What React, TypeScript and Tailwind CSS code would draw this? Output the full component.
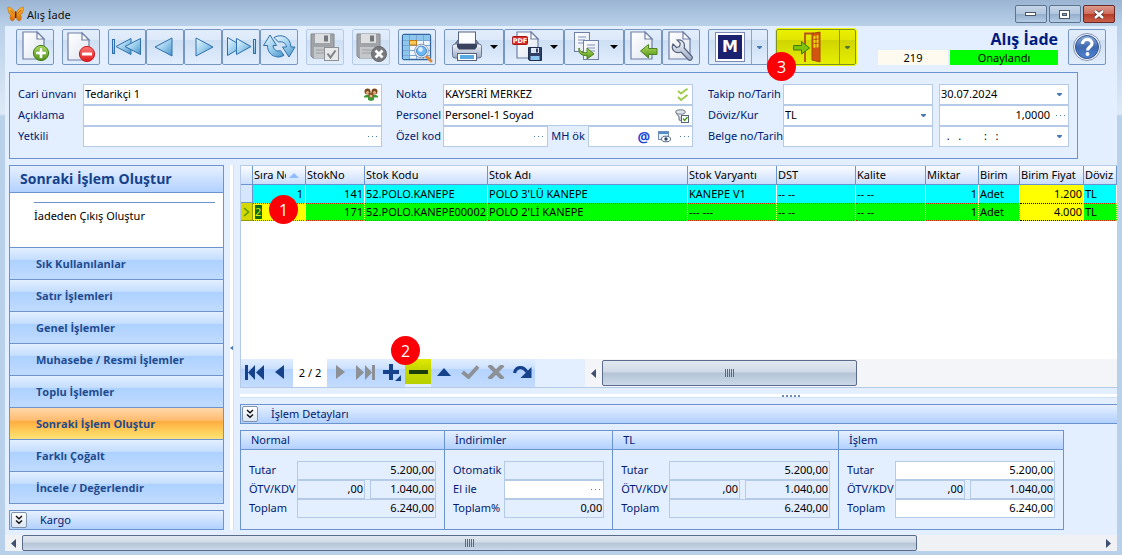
import type { ReactNode } from "react";

const deskGradient =
  "bg-[linear-gradient(#9ab4d2_0px,#b9d0e9_26px,#dde9f6_114px,#bad1ea_116px,#b9d0ea_100%)]";

/* ---------- icons ---------- */

function Defs() {
  return (
    <svg width="0" height="0" className="absolute" aria-hidden="true">
      <defs>
        <linearGradient id="gBlue" x1="0" y1="0" x2="1" y2="1">
          <stop offset="0" stopColor="#eaf7fe" />
          <stop offset="0.5" stopColor="#9fd0ee" />
          <stop offset="1" stopColor="#4593c8" />
        </linearGradient>
        <linearGradient id="gPage" x1="0" y1="0" x2="1" y2="1">
          <stop offset="0" stopColor="#ffffff" />
          <stop offset="1" stopColor="#dfe5f0" />
        </linearGradient>
        <linearGradient id="gGreen" x1="0" y1="0" x2="0" y2="1">
          <stop offset="0" stopColor="#b8e05e" />
          <stop offset="1" stopColor="#4d8f15" />
        </linearGradient>
        <linearGradient id="gRed" x1="0" y1="0" x2="0" y2="1">
          <stop offset="0" stopColor="#ff7a78" />
          <stop offset="1" stopColor="#e1181c" />
        </linearGradient>
        <linearGradient id="gSteel" x1="0" y1="0" x2="0" y2="1">
          <stop offset="0" stopColor="#f7f9fc" />
          <stop offset="1" stopColor="#9aa8c2" />
        </linearGradient>
        <linearGradient id="gHelp" x1="0" y1="0" x2="0" y2="1">
          <stop offset="0" stopColor="#8fb0df" />
          <stop offset="0.5" stopColor="#3f68b0" />
          <stop offset="1" stopColor="#4f86d4" />
        </linearGradient>
        <linearGradient id="gWing" x1="0" y1="0" x2="0" y2="1">
          <stop offset="0" stopColor="#ffb62e" />
          <stop offset="1" stopColor="#d96a08" />
        </linearGradient>
      </defs>
    </svg>
  );
}

function Svg({ w = 34, h = 34, children }: { w?: number; h?: number; children: ReactNode }) {
  return (
    <svg width={w} height={h} viewBox={`0 0 ${w} ${h}`} fill="none" aria-hidden="true" className="shrink-0">
      {children}
    </svg>
  );
}

const Page = ({ x = 5, y = 2, w = 21, h = 27 }: { x?: number; y?: number; w?: number; h?: number }) => (
  <>
    <path
      d={`M${x} ${y}h${w - 7}l7 7v${h - 7}h${-w}z`}
      fill="url(#gPage)"
      stroke="#6f7fa6"
      strokeWidth="1.2"
    />
    <path d={`M${x + w - 7} ${y}v7h7z`} fill="#fff" stroke="#6f7fa6" strokeWidth="1.2" />
  </>
);

const NewDoc = () => (
  <Svg>
    <Page />
    <circle cx="23" cy="23" r="7.6" fill="url(#gGreen)" stroke="#3f7a18" />
    <path d="M21.3 17.8h3.4v3.5h3.5v3.4h-3.5v3.5h-3.4v-3.5h-3.5v-3.4h3.5z" fill="#fff" stroke="#4d8f15" strokeWidth=".5" />
  </Svg>
);
const DeleteDoc = () => (
  <Svg>
    <Page x={4} y={3} />
    <circle cx="23" cy="24" r="7.6" fill="url(#gRed)" stroke="#c81a1e" />
    <rect x="18" y="22.4" width="10" height="3.2" rx=".6" fill="#fff" />
  </Svg>
);
const FirstIcon = () => (
  <Svg>
    <g fill="url(#gBlue)" stroke="#2f6fab" strokeWidth="1">
      <rect x="2.5" y="9.5" width="2" height="14" />
      <path d="M21 8.5v16L6 16.5z" />
      <path d="M30.5 8.5v16L15 16.5z" />
    </g>
  </Svg>
);
const PrevIcon = () => (
  <Svg>
    <path d="M24 8v18L7 17z" fill="url(#gBlue)" stroke="#2f6fab" />
  </Svg>
);
const NextIcon = () => (
  <Svg>
    <path d="M10 8v18l17-9z" fill="url(#gBlue)" stroke="#2f6fab" />
  </Svg>
);
const LastIcon = () => (
  <Svg>
    <g fill="url(#gBlue)" stroke="#2f6fab" strokeWidth="1">
      <path d="M3.5 7.5v18L19 16.5z" />
      <path d="M12.5 8.5v16L27 16.5z" />
      <rect x="29.5" y="9.5" width="2" height="14" />
    </g>
  </Svg>
);
const RefreshIcon = () => (
  <Svg>
    <g fill="url(#gBlue)" stroke="#2f6fab" strokeWidth="1">
      <path d="M8 5L1.5 15.500h4c0 6 3.500 11 10.500 11.500 2.500 0 4.500-.6 6-1.800l-3.500-4.500c-4 1-7-1-7.500-5.200h3.500z" />
      <path d="M12 7.500c8-4.500 16.500 0 17 9.500h4L27 27l-6.500-10h4c-.5-4-4-6-8-5z" />
    </g>
  </Svg>
);
const Disk = ({ children }: { children: ReactNode }) => (
  <Svg>
    <path d="M3 4h23v24H5l-2-2z" fill="#a0a3a7" stroke="#85888c" />
    <rect x="7" y="4" width="15" height="9" fill="#dcdee0" />
    <rect x="16" y="5.5" width="4" height="6" fill="#73767a" />
    <rect x="6" y="17" width="17" height="11" fill="#c4c7ca" />
    <path d="M8 20h12M8 23h12" stroke="#9b9ea2" />
    {children}
  </Svg>
);
const SaveOk = () => (
  <Disk>
    <rect x="16.5" y="17.5" width="14" height="13" fill="#e6e8ea" stroke="#8d9094" />
    <path d="M19.5 23.5l3 4 5-7" stroke="#7e8185" strokeWidth="2" />
  </Disk>
);
const SaveCancel = () => (
  <Disk>
    <circle cx="25" cy="24" r="7.5" fill="#77797d" stroke="#66686c" />
    <path d="M21.5 20.5l7 7m0-7l-7 7" stroke="#fff" strokeWidth="2.8" />
  </Disk>
);
const GridFind = () => (
  <Svg>
    <rect x="2.5" y="4.5" width="28" height="25" rx="1.5" fill="#eef5fc" stroke="#34679f" strokeWidth="1.3" />
    <path d="M3 5h27v5H3zM3 10h6v19H3z" fill="#8cc6ec" />
    <path d="M3 10.5h27M3 15.500h27M3 20.500h27M3 25.500h27M9.500 5v24M16.500 5v24M23.500 5v24" stroke="#7ba6d2" />
    <rect x="9.5" y="10.5" width="7" height="4.5" fill="#ffc65a" stroke="#c17a10" />
    <path d="M26 26l5 5" stroke="#d98a3c" strokeWidth="3" strokeLinecap="round" />
    <circle cx="21.500" cy="21" r="6.800" fill="#fff" stroke="#8793ad" strokeWidth="1" />
    <circle cx="21.500" cy="21" r="5" fill="#6db7f3" stroke="#4682c4" strokeWidth="1" />
    <circle cx="20.500" cy="19.500" r="2.400" fill="#d8eefd" />
  </Svg>
);
const Printer = () => (
  <Svg>
    <path d="M5 14l3-4h18l3 4v2H5z" fill="#77829d" stroke="#55617f" />
    <rect x="8.5" y="2" width="17" height="14" fill="#fbfcfe" stroke="#55617f" />
    <path d="M9 16.5h16v2H9z" fill="#2e3750" />
    <rect x="2.5" y="14" width="29" height="14" rx="2.5" fill="url(#gSteel)" stroke="#6a7796" />
    <path d="M7 14h20v3l-2 2.500H9L7 17z" fill="#3a435e" />
    <rect x="7.5" y="23.5" width="19" height="7" fill="#fff" stroke="#55617f" />
    <rect x="10" y="25" width="14" height="4" fill="#57abe2" />
  </Svg>
);
const PdfIcon = () => (
  <Svg>
    <Page x={7} y={2} w={21} h={26} />
    <rect x="2.5" y="6.5" width="15" height="8" rx="1" fill="#d92b2b" stroke="#a51717" />
    <text x="10" y="13" fontSize="6.5" fontWeight="700" fill="#fff" textAnchor="middle" fontFamily="DejaVu Sans, sans-serif">
      PDF
    </text>
    <path d="M18.5 17.5h13v13h-12l-1-1z" fill="#2f3f66" stroke="#222e4d" />
    <rect x="21" y="18" width="8" height="5" fill="#dfe8f4" />
    <rect x="26" y="18.500" width="2" height="4" fill="#2f3f66" />
    <rect x="20.500" y="26" width="9" height="4" fill="#8cc6ee" />
  </Svg>
);
const CopyIcon = () => (
  <Svg>
    <rect x="4.5" y="2.5" width="15" height="19" fill="url(#gPage)" stroke="#6f7fa6" />
    <path d="M8 7h8M8 10h7M8 13h6" stroke="#7e92bd" />
    <rect x="13.5" y="10.500" width="15" height="19" fill="url(#gPage)" stroke="#6f7fa6" />
    <path d="M17 15h8M17 18h8M17 21h8" stroke="#7e92bd" />
    <path d="M9 18c1 4 4 5 8 4.500V18l7 6-7 5v-3.500c-5 .5-9-2-8-7.500z" fill="url(#gGreen)" stroke="#4d8423" />
  </Svg>
);
const ImportIcon = () => (
  <Svg>
    <Page x={5} y={2} />
    <path d="M14.500 21l8-6.500v4h8.500v6h-8.500v3.500z" fill="url(#gGreen)" stroke="#4d8423" />
  </Svg>
);
const WrenchIcon = () => (
  <Svg>
    <Page x={5} y={2} />
    <path
      d="M9 14l3.500 3.500 3-1 .8-3.200L13 10c4-.7 7.500 1.600 7.500 6l-.3 2 7.800 8.500c1.500 1.800-1.500 5-3.500 3.300L17 22c-6 2-10.500-2.500-8-8z"
      fill="url(#gSteel)"
      stroke="#56637f"
      strokeWidth="1.2"
    />
  </Svg>
);
const DoorIcon = () => (
  <Svg>
    <path d="M14 32V3.500h9" stroke="#b8521a" strokeWidth="1.800" />
    <path d="M21 3.500l8-1.500v30l-8-2z" fill="#d2560f" stroke="#a84508" />
    <path d="M22.500 6l5-.7v12l-5 .5z" fill="#f1dc00" />
    <path d="M25 5.500v12M22.500 9.500l5-.5M22.500 13.500l5-.3" stroke="#b8521a" />
    <path d="M2.500 15.500h8v-4l8 6.500-8 6v-4h-8z" fill="#80c20c" stroke="#3f7a08" />
  </Svg>
);
const HelpIcon = () => (
  <Svg>
    <circle cx="17" cy="17" r="13.5" fill="#f1f5fb" stroke="#8593b3" />
    <circle cx="17" cy="17" r="11.5" fill="url(#gHelp)" stroke="#2f5294" />
    <path d="M12.5 14c0-6 9.500-6 9.500-.5 0 3.500-4.500 3.500-4.500 7" stroke="#fff" strokeWidth="3.2" />
    <circle cx="17.5" cy="24" r="1.9" fill="#fff" />
  </Svg>
);
const Butterfly = () => (
  <Svg w={18} h={17}>
    <path d="M8.500 7.500C6.500 2.500 3 1 .8 1.200c0 4 1.200 7 3 7.800-1.500 2-1 5 1.200 6C7 15 8.200 12.500 8.500 10z" fill="url(#gWing)" stroke="#b5640a" strokeWidth=".5" />
    <path d="M9 7.500c2-5 5-6.500 7.500-6.300 0 4-1.200 7-3 7.800 1.500 2 1 5-1.200 6-2 0-3-2.500-3.300-5z" fill="url(#gWing)" stroke="#b5640a" strokeWidth=".5" />
    <path d="M8.700 5.500v6.500" stroke="#4b2606" strokeWidth="1.300" />
    <path d="M3.500 4l3 3.500M14 4l-3 3.500" stroke="#9a5208" strokeWidth=".6" />
  </Svg>
);
const Dots = () => (
  <Svg w={10} h={3}>
    <path d="M1 1h1v1H1zM5 1h1v1H5zM9 1h1v1H9z" fill="#4f7fa5" />
  </Svg>
);
const Caret = () => (
  <Svg w={5} h={3}>
    <path d="M0 0h5v1L3 3H2L0 1z" fill="#4a79b5" />
  </Svg>
);
const People = () => (
  <Svg w={14} h={13}>
    <path d="M0 8l2-1h10l2 1v1.500H10V12l-3 1-3-1V9.500H0z" fill="#3d9b35" />
    <circle cx="3.5" cy="3.500" r="3" fill="#7c4a1d" />
    <circle cx="10.5" cy="3.500" r="3" fill="#7c4a1d" />
    <circle cx="3.5" cy="4.500" r="1.6" fill="#e0ad7c" />
    <circle cx="10.5" cy="4.500" r="1.6" fill="#e0ad7c" />
    <circle cx="7" cy="7" r="2.6" fill="#7c4a1d" />
    <circle cx="7" cy="8" r="1.6" fill="#e8b788" />
  </Svg>
);
const Checks = () => (
  <Svg w={12} h={13}>
    <path d="M1 3l3 2.500L10.500.8M1 9l3 3 6.500-5" stroke="#9ccb4c" strokeWidth="1.9" />
  </Svg>
);
const Person = () => (
  <Svg w={14} h={14}>
    <ellipse cx="5.5" cy="3" rx="4.8" ry="2.2" fill="#dfe3ea" stroke="#6d7688" />
    <path d="M1 4l3 4v3l2.500 1V8" fill="#c7cdd9" stroke="#6d7688" />
    <rect x="6.5" y="6.5" width="7" height="7" fill="#fff" stroke="#56637f" />
    <path d="M8 9.500l1.700 2L12.500 8" stroke="#4c9a1c" strokeWidth="1.4" />
  </Svg>
);
const ViewIcon = () => (
  <Svg w={13} h={12}>
    <rect x=".5" y=".5" width="10" height="8" fill="#e8f1fb" stroke="#6f8fb8" />
    <path d="M1 1h9v2H1z" fill="#4d8ecb" />
    <ellipse cx="8" cy="8" rx="4.5" ry="2.8" fill="#fff" stroke="#566a8a" />
    <circle cx="8" cy="8" r="1.7" fill="#2f466e" />
  </Svg>
);
const Chevrons = () => (
  <Svg w={10} h={10}>
    <path d="M2 1l3 2.700L8 1M2 5.500l3 2.700 3-2.700" stroke="#111" strokeWidth="1.5" />
  </Svg>
);

/* ---------- toolbar ---------- */

function ToolButton({ label, disabled, children }: { label: string; disabled?: boolean; children: ReactNode }) {
  return (
    <button
      type="button"
      aria-label={label}
      disabled={disabled}
      className="flex h-9 w-[38px] shrink-0 items-center justify-center rounded-[2px] border border-[#7896c2] bg-[linear-gradient(#e3eefc_0%,#dce9f8_28%,#cddff3_29%,#e0edfd_100%)] disabled:border-[#b5cae6]"
    >
      {children}
    </button>
  );
}

function MenuButton({ label, children }: { label: string; children: ReactNode }) {
  return (
    <button
      type="button"
      aria-label={label}
      className="flex h-9 w-[60px] shrink-0 items-center gap-[6px] rounded-[2px] border border-[#7896c2] bg-[linear-gradient(#e3eefc_0%,#dce9f8_28%,#cddff3_29%,#e0edfd_100%)] pl-[5px]"
    >
      {children}
      <Svg w={8} h={4}>
        <path d="M0 0h8L4 4z" fill="#000" />
      </Svg>
    </button>
  );
}

function Badge({ n, place }: { n: number; place: string }) {
  return (
    <span
      className={`absolute z-10 flex size-[29px] items-center justify-center rounded-full bg-[#fb0007] font-['Open_Sans',sans-serif] text-base leading-none text-white ${place}`}
    >
      {n}
    </span>
  );
}

function TitleBar() {
  const btn =
    "flex h-[18px] w-8 items-center justify-center rounded-[2px] border border-[#5d7491] bg-[linear-gradient(#c6d6e9_0%,#b2c6de_48%,#93adcb_50%,#b4cbe4_100%)]";
  return (
    <header className="flex h-[26px] items-start justify-between pr-[2px] pl-[2px]">
      <div className="flex items-center gap-[2px] pt-[6px]">
        <Butterfly />
        <h1 className="leading-4 text-[#111]">Alış İade</h1>
      </div>
      <div className="flex gap-[2px] pt-[5px]">
        <button type="button" aria-label="Simge durumuna küçült" className={btn}>
          <Svg w={12} h={5}>
            <rect x=".5" y=".5" width="10" height="3" fill="#fff" stroke="#4a5566" />
          </Svg>
        </button>
        <button type="button" aria-label="Ekranı kapla" className={btn}>
          <Svg w={12} h={9}>
            <rect x=".5" y=".5" width="10" height="8" fill="#fff" stroke="#4a5566" />
            <rect x="3.5" y="3.5" width="4" height="2" fill="#8ea6c2" stroke="#4a5566" />
          </Svg>
        </button>
        <button
          type="button"
          aria-label="Kapat"
          className="flex h-[18px] w-8 items-center justify-center rounded-[2px] border border-[#6b2722] bg-[linear-gradient(#dd9a8c_0%,#cf6e5c_48%,#b63a26_50%,#c9604a_100%)]"
        >
          <Svg w={12} h={9}>
            <path d="M2 1l8 7M10 1L2 8" stroke="#4a3036" strokeWidth="4" />
            <path d="M2 1l8 7M10 1L2 8" stroke="#fff" strokeWidth="2.4" />
          </Svg>
        </button>
      </div>
    </header>
  );
}

function Toolbar() {
  return (
    <div className="flex items-start gap-2 px-[11px] pt-[3px] pb-[7px]">
      <ToolButton label="Yeni"><NewDoc /></ToolButton>
      <ToolButton label="Sil"><DeleteDoc /></ToolButton>
      <div className="flex">
        <ToolButton label="İlk kayıt"><FirstIcon /></ToolButton>
        <ToolButton label="Önceki kayıt"><PrevIcon /></ToolButton>
        <ToolButton label="Sonraki kayıt"><NextIcon /></ToolButton>
        <ToolButton label="Son kayıt"><LastIcon /></ToolButton>
        <ToolButton label="Yenile"><RefreshIcon /></ToolButton>
      </div>
      <ToolButton label="Kaydet" disabled><SaveOk /></ToolButton>
      <ToolButton label="Vazgeç" disabled><SaveCancel /></ToolButton>
      <ToolButton label="Ara"><GridFind /></ToolButton>
      <div className="flex">
        <MenuButton label="Yazdır"><Printer /></MenuButton>
        <MenuButton label="PDF kaydet"><PdfIcon /></MenuButton>
        <MenuButton label="Kopyala"><CopyIcon /></MenuButton>
        <ToolButton label="İçe aktar"><ImportIcon /></ToolButton>
        <ToolButton label="Ayarlar"><WrenchIcon /></ToolButton>
      </div>
      <div className="flex h-9 w-[60px] shrink-0 rounded-[2px] border border-[#7896c2] bg-[linear-gradient(#e3eefc_0%,#dce9f8_28%,#cddff3_29%,#e0edfd_100%)]">
        <button type="button" className="flex flex-1 items-center justify-center" aria-label="M">
          <span className="flex size-[30px] items-center justify-center border border-[#7c8bb5] bg-white">
            <span className="flex size-6 items-center justify-center bg-[#1a226f] font-['DejaVu_Sans',sans-serif] text-base font-bold text-white">M</span>
          </span>
        </button>
        <button type="button" aria-label="M menüsü" className="flex w-4 items-center justify-center border-l border-[#8ba6cd]">
          <Caret />
        </button>
      </div>
      <div className="relative flex h-9 w-20 shrink-0 rounded-[2px] border border-[#7e9321] bg-[linear-gradient(#eaf000_0%,#e2e600_28%,#d0d400_29%,#e6ee00_100%)] outline-1 outline-[#f0f800]">
        <button type="button" className="flex flex-1 items-center justify-center" aria-label="Çıkış">
          <DoorIcon />
        </button>
        <button type="button" aria-label="Çıkış menüsü" className="flex w-4 items-center justify-center border-l border-[#8c9c10]">
          <Svg w={5} h={3}><path d="M0 0h5v1L3 3H2L0 1z" fill="#4d7430" /></Svg>
        </button>
        <Badge n={3} place="top-[22px] -left-[10px]" />
      </div>
      <div className="ml-auto flex items-start gap-[10px]">
        <div className="w-[180px]">
          <h2 className="h-[21px] text-right font-['Open_Sans',sans-serif] text-base leading-5 font-bold text-[#001b80]">Alış İade</h2>
          <div className="flex gap-[2px] text-center leading-[15px] text-black">
            <span className="w-[70px] bg-[#fffaf0]">219</span>
            <span className="flex-1 bg-[#00ff00]">Onaylandı</span>
          </div>
        </div>
        <ToolButton label="Yardım"><HelpIcon /></ToolButton>
      </div>
    </div>
  );
}

/* ---------- header form ---------- */

function Field({
  id,
  label,
  value = "",
  right,
  bg = "bg-white",
  children,
}: {
  id: string;
  label?: string;
  value?: string;
  right?: boolean;
  bg?: string;
  children?: ReactNode;
}) {
  return (
    <div className={`flex h-full min-w-0 flex-1 items-center border border-[#b5cae6] ${bg}`}>
      <input
        id={id}
        aria-label={label}
        defaultValue={value}
        className={`h-full min-w-0 flex-1 bg-transparent px-px pb-[2px] whitespace-pre text-black outline-none ${right ? "text-right" : ""}`}
      />
      {children && <span className="flex shrink-0 items-center gap-2 pr-[3px] pl-1">{children}</span>}
    </div>
  );
}

function Row({ id, label, w, children }: { id: string; label: string; w: string; children: ReactNode }) {
  return (
    <div className="flex h-[21px] items-center">
      <label htmlFor={id} className={`shrink-0 pb-[2px] whitespace-nowrap ${w}`}>{label}</label>
      {children}
    </div>
  );
}

const IconButton = ({ label, children }: { label: string; children: ReactNode }) => (
  <button type="button" aria-label={label} className="flex h-4 min-w-3 items-center justify-center">{children}</button>
);

function HeaderForm() {
  return (
    <form className="mr-[39px] ml-1 flex border border-[#6b93cd] py-[11px] pr-2 pl-2">
      <div className="w-[364px] shrink">
        <Row id="cari" label="Cari ünvanı" w="w-[65px]">
          <Field id="cari" value="Tedarikçi 1"><People /></Field>
        </Row>
        <Row id="aciklama" label="Açıklama" w="w-[65px]"><Field id="aciklama" /></Row>
        <Row id="yetkili" label="Yetkili" w="w-[65px]">
          <Field id="yetkili"><IconButton label="Yetkili seç"><Dots /></IconButton></Field>
        </Row>
      </div>
      <div className="ml-[14px] min-w-0 flex-1">
        <Row id="nokta" label="Nokta" w="w-[47px]">
          <Field id="nokta" value="KAYSERİ MERKEZ"><Checks /></Field>
        </Row>
        <Row id="personel" label="Personel" w="w-[47px]">
          <Field id="personel" value="Personel-1 Soyad"><Person /></Field>
        </Row>
        <Row id="ozel" label="Özel kod" w="w-[47px]">
          <Field id="ozel"><IconButton label="Özel kod seç"><Dots /></IconButton></Field>
          <label htmlFor="mh" className="w-10 shrink-0 pb-[2px] text-center whitespace-nowrap">MH ök</label>
          <Field id="mh">
            <span className="text-sm leading-none font-bold text-[#1c46d8]">@</span>
            <ViewIcon />
            <Dots />
          </Field>
        </Row>
      </div>
      <div className="ml-[15px] w-[361px] shrink">
        <Row id="takip" label="Takip no/Tarih" w="w-[75px]">
          <Field id="takip" />
          <div className="ml-[6px] flex h-full w-[130px]">
            <Field id="tarih" label="Tarih" value="30.07.2024"><IconButton label="Takvim"><Caret /></IconButton></Field>
          </div>
        </Row>
        <Row id="doviz" label="Döviz/Kur" w="w-[75px]">
          <div className="flex h-full min-w-0 flex-1 items-center border border-[#b5cae6] bg-white pr-[6px]">
            <select id="doviz" className="h-full min-w-0 flex-1 appearance-none bg-transparent px-px pb-[2px] text-black outline-none">
              <option>TL</option>
            </select>
            <Caret />
          </div>
          <div className="ml-[6px] flex h-full w-[130px]">
            <Field id="kur" label="Kur" value="1,0000" right><Dots /></Field>
          </div>
        </Row>
        <Row id="belge" label="Belge no/Tarih" w="w-[75px]">
          <Field id="belge" />
          <div className="ml-[6px] flex h-full w-[130px]">
            <Field id="belgetarih" label="Belge tarihi" value="  .   .        :   :"><IconButton label="Takvim"><Caret /></IconButton></Field>
          </div>
        </Row>
      </div>
    </form>
  );
}

/* ---------- sidebar ---------- */

const sections = [
  "Sık Kullanılanlar",
  "Satır İşlemleri",
  "Genel İşlemler",
  "Muhasebe / Resmi İşlemler",
  "Toplu İşlemler",
  "Sonraki İşlem Oluştur",
  "Farklı Çoğalt",
  "İncele / Değerlendir",
];

const ExpandButton = ({ label }: { label: string }) => (
  <button
    type="button"
    aria-label={label}
    className="flex size-4 items-center justify-center rounded-[2px] border border-[#7f93ad] bg-[linear-gradient(#ffffff,#dbe5f2)]"
  >
    <Chevrons />
  </button>
);

function Sidebar() {
  return (
    <aside className="flex w-[215px] shrink-0 flex-col gap-[6px]">
      <nav className="flex flex-1 flex-col border border-[#6b93cd] bg-white">
        <h3 className="h-[27px] border-b border-[#6b93cd] bg-[linear-gradient(#e6f0ff,#b2d1ff)] pl-[10px] font-['Open_Sans',sans-serif] text-sm leading-[26px] font-bold text-[#15428b]">
          Sonraki İşlem Oluştur
        </h3>
        <div className="min-h-[54px] flex-1 pt-[9px] pr-2 pl-6">
          <a href="#iade" className="block border-t border-[#6b93cd] pt-[5px] leading-4 text-black">
            İadeden Çıkış Oluştur
          </a>
        </div>
        {sections.map((s) => (
          <button
            key={s}
            type="button"
            className={`h-8 shrink-0 border-t border-[#6b93cd] pl-[26px] text-left font-['Open_Sans',sans-serif] text-[11px] font-bold text-[#1f4b8e] ${
              s === "Sonraki İşlem Oluştur"
                ? "bg-[linear-gradient(#ffd9aa_0%,#ffbb6e_40%,#ffab3f_42%,#ffd863_85%,#fee17b_100%)]"
                : "bg-[linear-gradient(#e3efff_0%,#c4ddff_38%,#add1ff_40%,#c0dbff_100%)]"
            }`}
          >
            {s}
          </button>
        ))}
      </nav>
      <section className="flex h-5 items-center gap-[13px] border border-[#6b93cd] bg-[linear-gradient(#e6f0ff,#b2d1ff)] pl-px">
        <ExpandButton label="Kargo aç" />
        <span>Kargo</span>
      </section>
    </aside>
  );
}

/* ---------- grid ---------- */

type Column = { name: string; w: string; right?: boolean; cells: [string, string] };

const columns: Column[] = [
  { name: "StokNo", w: "w-[59px]", right: true, cells: ["141", "171"] },
  { name: "Stok Kodu", w: "w-[123px]", cells: ["52.POLO.KANEPE", "52.POLO.KANEPE00002"] },
  { name: "Stok Adı", w: "w-[200px]", cells: ["POLO 3'LÜ KANEPE", "POLO 2'Lİ KANEPE"] },
  { name: "Stok Varyantı", w: "w-[89px]", cells: ["KANEPE V1", "--- ---"] },
  { name: "DST", w: "w-[79px]", cells: ["-- --", "-- --"] },
  { name: "Kalite", w: "w-[70px]", cells: ["-- --", "-- --"] },
  { name: "Miktar", w: "w-[53px]", right: true, cells: ["1", "1"] },
  { name: "Birim", w: "w-[41px]", cells: ["Adet", "Adet"] },
  { name: "Birim Fiyat", w: "w-[64px]", right: true, cells: ["1.200", "4.000"] },
  { name: "Döviz", w: "", cells: ["TL", "TL"] },
];

function StockTable() {
  const th = "overflow-hidden border-r border-b border-[#6b93cd] bg-[linear-gradient(#fbfcff,#c9deff)] px-px text-left font-normal whitespace-nowrap";
  return (
    <table className="w-full table-fixed border-separate border-spacing-0 text-black">
      <colgroup>
        <col className="w-3" />
        <col className="w-[53px]" />
        {columns.map((c) => (
          <col key={c.name} className={c.w} />
        ))}
      </colgroup>
      <thead>
        <tr className="h-[19px]">
          <th className={th} aria-label="Seçili" />
          <th className={th}>
            <span className="flex items-center justify-between">
              <span className="w-8 overflow-hidden">Sıra No</span>
              <svg width="10" height="5" viewBox="0 0 10 5" className="mr-[5px]" aria-hidden="true">
                <path d="M0 5L5 0l5 5z" fill="#8fbcff" />
              </svg>
            </span>
          </th>
          {columns.map((c) => (
            <th key={c.name} className={th}>{c.name}</th>
          ))}
        </tr>
      </thead>
      <tbody>
        <tr className="h-[18px]">
          <td className="border-r border-b border-[#6b93cd] bg-[#d6e6ff]" />
          <td className="border-r border-white bg-[#00ffff] pr-[2px] text-right">1</td>
          {columns.map((c) => (
            <td
              key={c.name}
              className={`overflow-hidden border-r border-white px-px whitespace-nowrap ${c.right ? "text-right" : ""} ${
                c.name === "Birim Fiyat" ? "bg-[#ffff00]" : "bg-[#00ffff]"
              }`}
            >
              {c.cells[0]}
            </td>
          ))}
        </tr>
        <tr className="h-[18px]">
          <td className="border-r border-b border-[#8f9a00] bg-[#d5d800]">
            <svg width="9" height="10" viewBox="0 0 9 10" className="mx-auto" aria-hidden="true">
              <path d="M2 1l4.500 4L2 9" fill="none" stroke="#5f9a00" strokeWidth="1.6" />
            </svg>
          </td>
          <td className="relative border-y border-r border-dotted border-[#b53000] border-r-white bg-[#ffff00] pl-[2px] text-left">
            <span className="inline-block w-[7px] bg-[#0f6b12] text-[#d8f000]">2</span>
            <Badge n={1} place="-top-[9px] left-4" />
          </td>
          {columns.map((c) => (
            <td
              key={c.name}
              className={`overflow-hidden border-y border-r border-dotted border-r-[#ffff66] px-px whitespace-nowrap ${c.right ? "text-right" : ""} ${
                c.name === "Birim Fiyat" ? "border-y-black bg-[#ffff00]" : "border-y-[#b53000] bg-[#00ff00]"
              }`}
            >
              {c.cells[1]}
            </td>
          ))}
        </tr>
      </tbody>
    </table>
  );
}

function NavButton({ label, disabled, children }: { label: string; disabled?: boolean; children: ReactNode }) {
  return (
    <button
      type="button"
      aria-label={label}
      disabled={disabled}
      className="flex w-[26px] items-center justify-center self-stretch bg-[linear-gradient(#e0edff_0%,#cbe0ff_35%,#b3d3ff_36%,#c3dcff_100%)] pb-[2px] text-[#15428b] disabled:text-[#8d9196]"
    >
      {children}
    </button>
  );
}

const grip = "h-2 w-[9px] bg-[repeating-linear-gradient(90deg,#5a6880_0px,#5a6880_1px,transparent_1px,transparent_2px)]";

function Navigator() {
  return (
    <div className="flex h-[29px] items-stretch border-b border-[#b5cae6]">
      <NavButton label="İlk">
        <Svg w={20} h={15}><path d="M1 0h3v15H1zM11 0v15L4 7.500zM20 0v15l-8-7.500z" fill="currentColor" /></Svg>
      </NavButton>
      <NavButton label="Önceki">
        <Svg w={10} h={14}><path d="M9 0v14L0 7z" fill="currentColor" /></Svg>
      </NavButton>
      <span className="flex w-[34px] items-center justify-center bg-white text-black">2 / 2</span>
      <NavButton label="Sonraki" disabled>
        <Svg w={10} h={14}><path d="M1 0v14l9-7z" fill="currentColor" /></Svg>
      </NavButton>
      <NavButton label="Son" disabled>
        <Svg w={20} h={15}><path d="M0 0v15l8-7.500zM9 0v15l7-7.500zM16 0h3v15h-3z" fill="currentColor" /></Svg>
      </NavButton>
      <NavButton label="Ekle">
        <Svg w={18} h={18}><path d="M6 1h4v6h6v4h-6v6H6v-6H0V7h6zM18 12v6h-6z" fill="currentColor" /></Svg>
      </NavButton>
      <div className="relative h-[25px] w-[26px]">
        <button type="button" aria-label="Sil" className="flex size-full items-center justify-center bg-[linear-gradient(#e0e800_0%,#c6d800_40%,#b8d000_100%)]">
          <Svg w={19} h={4}><path d="M0 0h19v4H0z" fill="#1b3d0c" /></Svg>
        </button>
        <Badge n={2} place="-top-[23px] -left-[14px]" />
      </div>
      <NavButton label="Yukarı">
        <Svg w={14} h={8}><path d="M0 8L7 0l7 8z" fill="currentColor" /></Svg>
      </NavButton>
      <NavButton label="Onayla" disabled>
        <Svg w={19} h={14}><path d="M1.5 7l6 5L17 1.500" stroke="currentColor" strokeWidth="3.8" /></Svg>
      </NavButton>
      <NavButton label="İptal" disabled>
        <Svg w={18} h={14}><path d="M2 0l14 14M16 0L2 14" stroke="currentColor" strokeWidth="4" /></Svg>
      </NavButton>
      <NavButton label="Tazele">
        <Svg w={19} h={14}>
          <path d="M1.5 8C3 1.500 10 .5 14 7" stroke="currentColor" strokeWidth="3.2" />
          <path d="M18.500 2v11H7.500z" fill="currentColor" />
        </Svg>
      </NavButton>
      <div className="ml-[50px] flex flex-1 items-stretch bg-[#f4f5f8]">
        <button type="button" aria-label="Sola kaydır" className="flex w-[17px] items-center justify-center">
          <Svg w={5} h={9}><path d="M5 0v9L0 4.500z" fill="#3f4f70" /></Svg>
        </button>
        <div className="my-px flex w-[48%] items-center justify-center rounded-[2px] border border-[#5b6b8c] bg-[linear-gradient(#e2e8f0_0%,#d0dae6_45%,#b5c4d6_50%,#cad8e8_100%)]">
          <div className={grip} />
        </div>
      </div>
    </div>
  );
}

/* ---------- totals ---------- */

function Group({ title, w, children }: { title: string; w: string; children: ReactNode }) {
  return (
    <fieldset className={`min-w-0 border-y border-r border-[#6b93cd] first:border-l ${w}`}>
      <div className="h-[19px] border-b border-[#6b93cd] bg-[linear-gradient(#e6f0ff,#b2d1ff)] pl-[10px] leading-[18px]">{title}</div>
      <div className="px-2 pt-[11px] pb-[11px]">{children}</div>
    </fieldset>
  );
}

const TotalRow = ({ id, label, w = "w-12", children }: { id: string; label: string; w?: string; children: ReactNode }) => (
  <div className="flex h-[19px] items-center">
    <label htmlFor={id} className={`shrink-0 pb-[2px] whitespace-nowrap ${w}`}>{label}</label>
    {children}
  </div>
);

function Totals({ id, kdv, white }: { id: string; kdv: string; white?: boolean }) {
  const bg = white ? "bg-white" : "bg-[#e3eeff]";
  return (
    <>
      <TotalRow id={`${id}-tutar`} label="Tutar"><Field id={`${id}-tutar`} value="5.200,00" right bg={bg} /></TotalRow>
      <TotalRow id={`${id}-otv`} label="ÖTV/KDV">
        <Field id={`${id}-otv`} value=",00" right bg="bg-[#e3eeff]" />
        <div className={`ml-[5px] flex h-full shrink-0 ${kdv}`}>
          <Field id={`${id}-kdv`} label="KDV" value="1.040,00" right bg="bg-[#e3eeff]" />
        </div>
      </TotalRow>
      <TotalRow id={`${id}-toplam`} label="Toplam"><Field id={`${id}-toplam`} value="6.240,00" right bg={bg} /></TotalRow>
    </>
  );
}

function Details() {
  return (
    <>
      <section className="mt-[6px] flex h-5 shrink-0 items-center gap-[13px] border-y border-l border-[#6b93cd] bg-[linear-gradient(#e6f0ff,#b2d1ff)] pl-px">
        <ExpandButton label="İşlem detayları aç" />
        <span>İşlem Detayları</span>
      </section>
      <div className="mt-[6px] mr-[53px] flex shrink-0">
        <Group title="Normal" w="flex-[204]"><Totals id="n" kdv="w-[66px]" /></Group>
        <Group title="İndirimler" w="flex-[168]">
          <TotalRow id="oto" label="Otomatik" w="w-[51px]"><Field id="oto" bg="bg-[#e3eeff]" /></TotalRow>
          <TotalRow id="el" label="El ile" w="w-[51px]"><Field id="el"><Dots /></Field></TotalRow>
          <TotalRow id="yuzde" label="Toplam%" w="w-[51px]"><Field id="yuzde" value="0,00" right bg="bg-[#e3eeff]" /></TotalRow>
        </Group>
        <Group title="TL" w="flex-[226]"><Totals id="t" kdv="w-[85px]" /></Group>
        <Group title="İşlem" w="flex-[225]"><Totals id="i" kdv="w-[85px]" white /></Group>
      </div>
    </>
  );
}

export default function App() {
  return (
    <div
      className={`flex min-h-screen flex-col px-[5px] pb-1 font-['Noto_Sans',sans-serif] text-[11px] leading-[14px] text-[#001b70] ${deskGradient}`}
    >
      <Defs />
      <TitleBar />
      <main className="flex flex-1 flex-col bg-[#e3eeff]">
        <Toolbar />
        <HeaderForm />
        <div className="mt-[6px] flex flex-1 pl-1">
          <Sidebar />
          <div className="mx-[6px] flex w-1 shrink-0 items-center border-r border-[#cfe0f7] bg-white">
            <svg width="4" height="6" viewBox="0 0 4 6" aria-hidden="true"><path d="M4 0v6L0 3z" fill="#4a79b5" /></svg>
          </div>
          <div className="flex min-w-0 flex-1 flex-col">
            <div className="flex flex-1 flex-col border-t border-l border-[#b5cae6] bg-white">
              <StockTable />
              <div className="min-h-10 flex-1" />
              <div className="bg-[#e3eeff]"><Navigator /></div>
            </div>
            <div className="mt-[6px] flex h-1 shrink-0 items-center justify-center border-b border-[#cfe0f7] bg-white pl-[226px]">
              <svg width="19" height="2" viewBox="0 0 19 2" className="shrink-0" aria-hidden="true">
                <path d="M0 1h19" stroke="#6f8fbb" strokeWidth="2" strokeDasharray="2 2" />
              </svg>
            </div>
            <Details />
          </div>
        </div>
        <div className="mt-[5px] flex h-4 items-stretch bg-[#f0f1f4]">
          <button type="button" aria-label="Sola kaydır" className="flex w-[17px] items-center justify-center">
            <Svg w={5} h={9}><path d="M5 0v9L0 4.500z" fill="#3f4f70" /></Svg>
          </button>
          <div className="flex flex-1">
            <div className="flex w-[83%] items-center justify-center rounded-[2px] border border-[#5b6b8c] bg-[linear-gradient(#e2e8f0_0%,#d0dae6_45%,#b5c4d6_50%,#cad8e8_100%)]">
              <div className={grip} />
            </div>
          </div>
          <button type="button" aria-label="Sağa kaydır" className="flex w-[17px] items-center justify-center">
            <Svg w={5} h={9}><path d="M0 0v9l5-4.500z" fill="#3f4f70" /></Svg>
          </button>
        </div>
      </main>
    </div>
  );
}
